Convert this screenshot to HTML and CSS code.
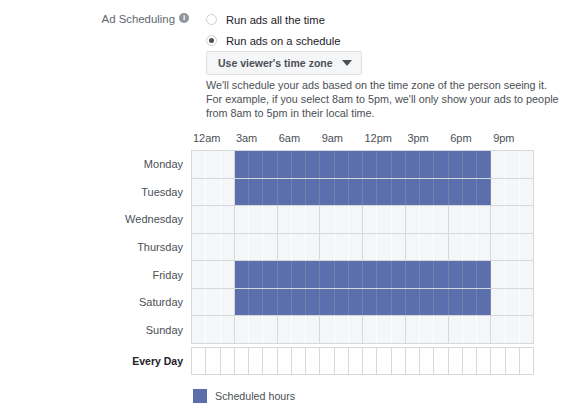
FILE: index.html
```html
<!doctype html>
<html lang="en">
<head>
    <meta charset="UTF-8">
    <title>Ad Scheduling</title>
    <link rel="stylesheet" href="styles.css">
</head>
<body>
    <div class="setting">
        <div class="setting-label">
            <span>Ad Scheduling</span>
            <i class="info">i</i>
        </div>
        <div class="setting-body">
            <label class="radio"><span class="dot"></span>Run ads all the time</label>
            <label class="radio checked"><span class="dot"></span>Run ads on a schedule</label>
            <div class="select">Use viewer's time zone <span class="caret"></span></div>
            <p class="desc">We'll schedule your ads based on the time zone of the person seeing it.<br>For example, if you select 8am to 5pm, we'll only show your ads to people<br>from 8am to 5pm in their local time.</p>
        </div>
    </div>

    <div class="schedule">
        <div class="hours">
            <span>12am</span><span>3am</span><span>6am</span><span>9am</span>
            <span>12pm</span><span>3pm</span><span>6pm</span><span>9pm</span>
        </div>
        <div class="days">
            <div class="day-names">
                <span>Monday</span><span>Tuesday</span><span>Wednesday</span><span>Thursday</span>
                <span>Friday</span><span>Saturday</span><span>Sunday</span>
            </div>
            <div class="week" id="week"></div>
        </div>
        <div class="days every">
            <div class="day-names"><span>Every Day</span></div>
            <div class="everyday" id="everyday"></div>
        </div>
        <div class="legend"><span class="swatch"></span>Scheduled hours</div>
    </div>

    <script>
        window.onload = function() {
            var oWeek = document.getElementById("week");
            var oEvery = document.getElementById("everyday");
            // scheduled hours per day, 3am to 9pm on
            var aOn = [true, true, false, false, true, true, false];
            var html = "";

            for (var d = 0; d < aOn.length; d++) {
                html += "<div class='row'>";
                for (var h = 0; h < 24; h++) {
                    var cls = "cell";
                    if (aOn[d] && h >= 3 && h < 21) cls += " on";
                    if (h % 3 == 2) cls += " edge";
                    html += "<span class='" + cls + "'></span>";
                }
                html += "</div>";
            }
            oWeek.innerHTML = html;

            html = "";
            for (var i = 0; i < 24; i++) {
                html += "<span class='cell'></span>";
            }
            oEvery.innerHTML = html;
        }
    </script>
</body>
</html>
```

FILE: styles.css
```css
* {
    margin: 0;
    padding: 0;
    box-sizing: border-box;
}
body {
    font: 11px "Liberation Sans", Arial, sans-serif;
    color: #1d2129;
    background: #fff;
    white-space: nowrap;
}
.setting {
    display: flex;
    padding-top: 9px;
}
.setting-label {
    width: 206px;
    flex-shrink: 0;
    padding-right: 17px;
    display: flex;
    justify-content: flex-end;
    align-items: flex-start;
    gap: 4px;
    color: #606770;
    font-size: 11.4px;
    line-height: 20px;
}
.info {
    width: 10px;
    height: 10px;
    margin-top: 4px;
    border-radius: 50%;
    background-color: #90949c;
    color: #fff;
    font: bold 8px/10px "Liberation Sans", Arial, sans-serif;
    text-align: center;
}
.setting-body {
    display: flex;
    flex-direction: column;
    align-items: flex-start;
}
.radio {
    display: flex;
    align-items: center;
    height: 21px;
    font-size: 11.2px;
    color: #1d2129;
}
.dot {
    width: 11px;
    height: 11px;
    margin-right: 9px;
    border: 1px solid #ccd0d5;
    border-radius: 50%;
    background-color: #fff;
    position: relative;
}
.checked .dot:after {
    content: "";
    position: absolute;
    left: 2px;
    top: 2px;
    width: 5px;
    height: 5px;
    border-radius: 50%;
    background-color: #4b4f56;
}
.select {
    width: 156px;
    height: 24px;
    padding: 0 9px 0 11px;
    display: flex;
    align-items: center;
    justify-content: space-between;
    border: 1px solid #dddfe2;
    border-radius: 2px;
    background-color: #f5f6f7;
    color: #4b4f56;
    font-size: 10.5px;
    font-weight: bold;
}
.caret {
    border-style: solid;
    border-width: 6px 5px 0;
    border-color: #4b4f56 transparent transparent;
}
.desc {
    margin-top: 3px;
    font-size: 10.8px;
    line-height: 14px;
    color: #4b4f56;
}
.schedule {
    padding-top: 11px;
}
.hours {
    display: flex;
    width: 343px;
    margin-left: 191px;
    height: 14px;
    line-height: 14px;
    color: #4b4f56;
}
.hours span {
    flex: 1;
    padding-left: 2px;
}
.days {
    display: flex;
    margin-top: 5px;
}
.day-names {
    width: 191px;
    padding-right: 8px;
    display: flex;
    flex-direction: column;
    text-align: right;
    color: #4b4f56;
}
.day-names span {
    flex: 1;
    display: flex;
    align-items: center;
    justify-content: flex-end;
}
.week {
    width: 343px;
    height: 194px;
    display: flex;
    flex-direction: column;
    border: 1px solid #d5d8dc;
}
.row {
    flex: 1;
    display: flex;
    border-bottom: 1px solid #d5d8dc;
}
.row:last-child {
    border-bottom: none;
}
.cell {
    flex: 1;
    background-color: #f5f6f7;
    border-right: 1px solid #fff;
}
.cell.edge {
    border-right-color: #d5d8dc;
}
.cell.on {
    background-color: #5b6fad;
    border-right-color: #7282ad;
}
.cell:last-child {
    border-right: none;
}
.every {
    margin-top: 3px;
}
.every .day-names {
    color: #1d2129;
    font-size: 10.5px;
    font-weight: bold;
}
.everyday {
    width: 343px;
    height: 28px;
    display: flex;
    border: 1px solid #d5d8dc;
}
.everyday .cell {
    background-color: #fff;
    border-right: 1px solid #d5d8dc;
}
.everyday .cell:last-child {
    border-right: none;
}
.legend {
    display: flex;
    align-items: center;
    margin: 14px 0 0 193px;
    font-size: 10.7px;
    color: #4b4f56;
}
.swatch {
    width: 14px;
    height: 14px;
    margin-right: 8px;
    background-color: #5b6fad;
}
```
